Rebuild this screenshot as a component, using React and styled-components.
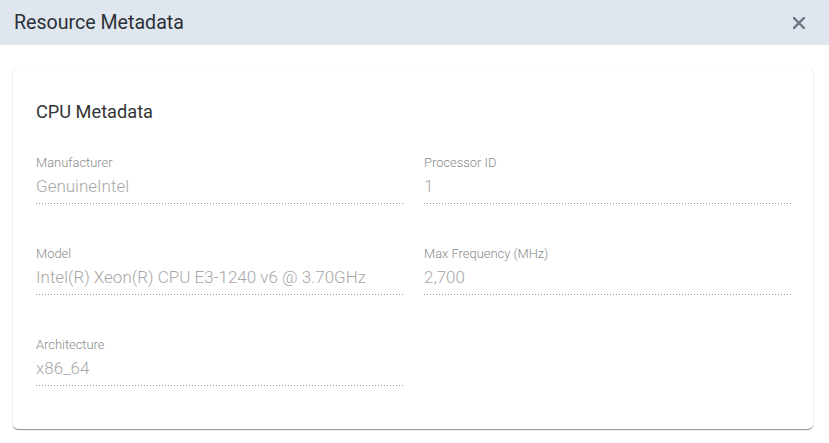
import React from "react";
import styled, { createGlobalStyle } from "styled-components";

const Global = createGlobalStyle`
  html, body { margin: 0; padding: 0; background: #fff; }
  body { font-family: Roboto, "Noto Sans", Arial, sans-serif; }
`;

const Dialog = styled.div`
  width: 829px;
  height: 443px;
  background: #fff;
  display: flex;
  flex-direction: column;
`;

const Header = styled.div`
  height: 45px;
  background: #dfe6ee;
  display: flex;
  align-items: center;
  justify-content: space-between;
  padding: 0 23px 0 14px;
  box-sizing: border-box;
`;

const Title = styled.h2`
  margin: 0;
  font-size: 19.6px;
  font-weight: 400;
  color: #2b3138;
`;

const CloseButton = styled.button`
  border: none;
  background: transparent;
  padding: 0;
  width: 14px;
  height: 14px;
  display: flex;
  align-items: center;
  justify-content: center;
  cursor: pointer;
`;

const Body = styled.div`
  padding: 22px 16px 0 13px;
`;

const Card = styled.div`
  background: #fff;
  border-radius: 5px;
  box-shadow: 0 1px 1px rgba(0, 0, 0, 0.45), 0 0 2px rgba(0, 0, 0, 0.08);
  padding: 34px 22px 43px 23px;
`;

const SectionTitle = styled.h3`
  margin: 0 0 32px;
  font-size: 18.2px;
  line-height: 22px;
  font-weight: 400;
  color: #333;
`;

const Grid = styled.div`
  display: grid;
  grid-template-columns: 1fr 1fr;
  column-gap: 21px;
  row-gap: 42px;
`;

const Field = styled.div`
  display: flex;
  flex-direction: column;
  padding-bottom: 8px;
  background-image: linear-gradient(to right, #9a9a9a 1px, transparent 1px);
  background-size: 3px 1px;
  background-repeat: repeat-x;
  background-position: left bottom;
`;

const Label = styled.span`
  font-size: 12.9px;
  line-height: 16px;
  color: #8a8a8a;
  font-weight: 300;
  margin-bottom: 5px;
`;

const Value = styled.span`
  font-size: 17px;
  line-height: 20px;
  color: #a8a8a8;
  font-weight: 300;
`;

const fields = [
  ["Manufacturer", "GenuineIntel"],
  ["Processor ID", "1"],
  ["Model", "Intel(R) Xeon(R) CPU E3-1240 v6 @ 3.70GHz"],
  ["Max Frequency (MHz)", "2,700"],
  ["Architecture", "x86_64"],
];

export default function App() {
  return (
    <>
      <Global />
      <Dialog>
        <Header>
          <Title>Resource Metadata</Title>
          <CloseButton aria-label="Close">
            <svg width="12" height="12" viewBox="0 0 12 12">
              <path d="M1 1L11 11M11 1L1 11" stroke="#6b7885" strokeWidth="2.4" strokeLinecap="square" />
            </svg>
          </CloseButton>
        </Header>
        <Body>
          <Card>
            <SectionTitle>CPU Metadata</SectionTitle>
            <Grid>
              {fields.map(([l, v]) => (
                <Field key={l}>
                  <Label>{l}</Label>
                  <Value>{v}</Value>
                </Field>
              ))}
            </Grid>
          </Card>
        </Body>
      </Dialog>
    </>
  );
}
